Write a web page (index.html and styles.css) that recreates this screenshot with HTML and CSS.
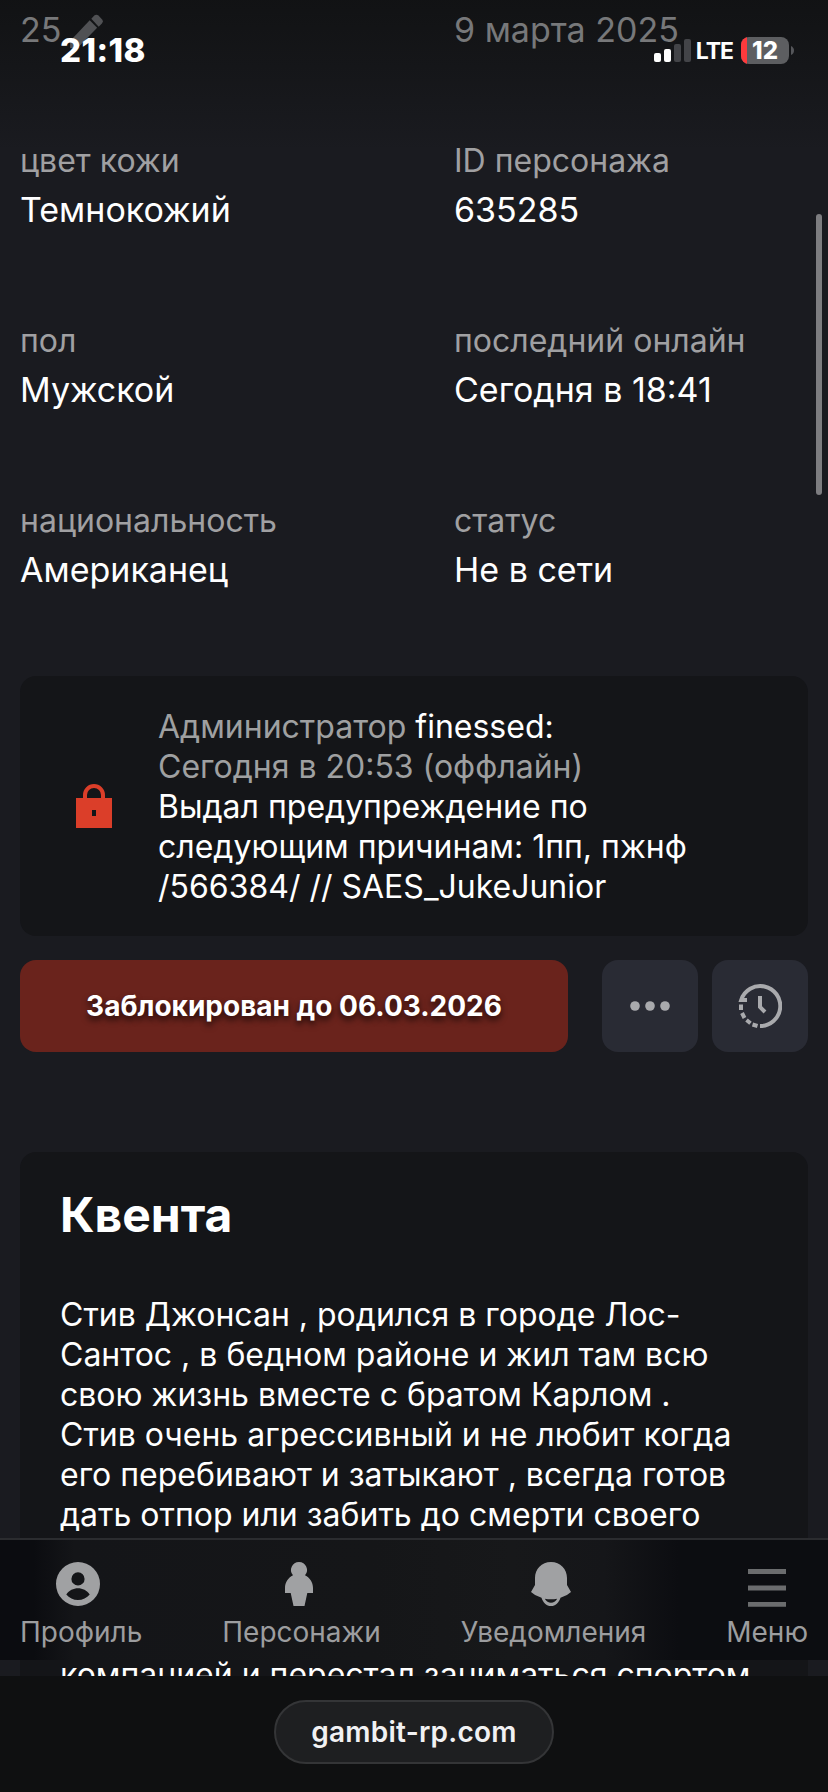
FILE: index.html
```html
<!DOCTYPE html>
<html lang="ru">
<head>
<meta charset="utf-8">
<title>gambit-rp.com</title>
<link rel="stylesheet" href="styles.css">
</head>
<body>
<div class="screen">
  <main class="content">
    <dl class="facts">
      <div class="fact fact-dim"><dd class="value">25 <svg class="pencil" viewBox="0 0 34 34"><path d="M2 25.500 20.500 6 27.500 13 9 32H2z"/><path d="M22 4.500 24.800 1.500q2-1.800 4 0l3.200 3.400q1.800 2 0 4L29 12z"/></svg></dd></div>
      <div class="fact fact-dim"><dd class="value">9 марта 2025</dd></div>
      <div class="fact"><dt class="label">цвет кожи</dt><dd class="value">Темнокожий</dd></div>
      <div class="fact"><dt class="label">ID персонажа</dt><dd class="value">635285</dd></div>
      <div class="fact"><dt class="label">пол</dt><dd class="value">Мужской</dd></div>
      <div class="fact"><dt class="label">последний онлайн</dt><dd class="value">Сегодня в 18:41</dd></div>
      <div class="fact"><dt class="label">национальность</dt><dd class="value">Американец</dd></div>
      <div class="fact"><dt class="label">статус</dt><dd class="value">Не в сети</dd></div>
    </dl>

    <section class="notice">
      <svg class="lock" viewBox="0 0 36 44"><path d="M9 15V11a9 9 0 0 1 18 0v4" fill="none" stroke="#db3e29" stroke-width="4"/><path fill="#db3e29" fill-rule="evenodd" d="M0 14h36v30H0zM16 26v6h4v-6z"/></svg>
      <div class="notice-text">
        <span class="muted">Администратор</span> finessed:<br>
        <span class="muted">Сегодня в 20:53 (оффлайн)</span><br>
        Выдал предупреждение по<br>
        следующим причинам: 1пп, пжнф<br>
        /566384/ // SAES_JukeJunior
      </div>
    </section>

    <div class="actions">
      <button class="ban">Заблокирован до 06.03.2026</button>
      <button class="square"><svg width="40" height="12" viewBox="0 0 40 12"><circle cx="5" cy="6" r="4.800"/><circle cx="20" cy="6" r="4.800"/><circle cx="35" cy="6" r="4.800"/></svg></button>
      <button class="square"><svg width="44" height="46" viewBox="0 0 44 46"><g fill="none" stroke="#a9aaad" stroke-width="4"><path d="M22 43A20 20 0 1 0 3.200 17H9"/><path d="M22 13v11l5 5"/><path d="M3 21.500v5.500M4 30l2.500 5M8.500 37l4 3.200M14.500 41.500l5 1.500"/></g></svg></button>
    </div>

    <section class="story">
      <h2 class="story-title">Квента</h2>
      <p class="story-text">Стив Джонсан , родился в городе Лос-<br>Сантос , в бедном районе и жил там всю<br>свою жизнь вместе с братом Карлом .<br>Стив очень агрессивный и не любит когда<br>его перебивают и затыкают , всегда готов<br>дать отпор или забить до смерти своего</p>
      <p class="story-text story-rest">компанией и перестал заниматься спортом</p>
    </section>
  </main>

  <div class="shade"></div>

  <header class="status">
    <span class="time">21:18</span>
    <div class="indicators">
      <svg class="signal" width="37" height="23" viewBox="0 0 37 23"><rect y="14" width="7" height="9" rx="2"/><rect x="10" y="10" width="7" height="13" rx="2"/><rect class="off" x="20" y="5" width="7" height="18" rx="2"/><rect class="off" x="30" width="7" height="23" rx="2"/></svg>
      <span class="network">LTE</span>
      <div class="battery"><span class="charge"></span><span class="percent">12</span></div>
      <svg width="3" height="9" viewBox="0 0 3 9"><path d="M0 0q3 1.500 3 4.500T0 9z" fill="#55565a"/></svg>
    </div>
  </header>

  <div class="scrollbar"></div>

  <nav class="tabs">
    <a class="tab"><svg width="44" height="44" viewBox="0 0 44 44"><path fill-rule="evenodd" d="M22 0a22 22 0 1 1 0 44 22 22 0 0 1 0-44zM22 10.300a6.600 6.600 0 1 0 0 13.200 6.600 6.600 0 0 0 0-13.200zM10.300 32.500C13 28.500 17.500 26.300 22 26.300s9 2.200 11.700 6.200C31 36 26.500 38 22 38s-9-2-11.700-5.500z"/></svg>Профиль</a>
    <a class="tab"><svg width="28" height="44" viewBox="0 0 28 44"><path d="M14 0a8 8 0 0 1 6 13.300C25 16 28 20.500 28 26v5h-5.700L19.500 44h-11L5.700 31H0v-5c0-5.500 3-10 8-12.700A8 8 0 0 1 14 0z"/></svg>Персонажи</a>
    <a class="tab"><svg width="42" height="44" viewBox="0 0 42 44"><path fill-rule="evenodd" d="M21 0C30.500 0 37 7 37 16v7l4 7q-4 4-10.500 5.700C29 40.500 25.500 44 21 44s-8-3.500-9.500-8.300Q5 34 1 30l4-7v-7C5 7 11.500 0 21 0zM14.800 36.800c1.500 2.800 3.700 4 6.200 4s4.700-1.200 6.200-4q-6.200 1-12.400 0z"/></svg>Уведомления</a>
    <a class="tab tab-menu"><svg width="38" height="44" viewBox="0 0 38 44"><path d="M0 7h38v5H0zM0 23.500h38v5H0zM0 40h38v4.800H0z"/></svg>Меню</a>
  </nav>

  <footer class="browser"><div class="address">gambit-rp.com</div></footer>
</div>
</body>
</html>
```
FILE: styles.css
```css
* { box-sizing: border-box; }

body {
  margin: 0;
  background: #1a1b20;
  color: #fff;
  font-family: Inter, "Noto Sans", sans-serif;
}

.screen {
  position: relative;
  display: flex;
  flex-direction: column;
  width: 828px;
  height: 1792px;
  overflow: hidden;
}

.content {
  height: 1676px;
  padding: 0 20px;
  overflow: hidden;
}

.facts {
  display: grid;
  grid-template-columns: 1fr 1fr;
  grid-template-rows: 140px 180px 180px 175px;
  column-gap: 80px;
  margin: 0;
  padding-top: 1px;
}

.fact-dim { color: #77787a; }
.label { font-size: 32px; line-height: 40px; color: #a0a0a2; white-space: nowrap; }
.value { margin: 8px 0 0; font-size: 34px; line-height: 42px; white-space: nowrap; }
.pencil { width: 36px; height: 36px; margin: -6px 0 0 -3px; vertical-align: -8px; fill: #505154; }

.notice {
  display: flex;
  align-items: center;
  gap: 46px;
  height: 260px;
  padding: 30px 20px 30px 56px;
  border-radius: 16px;
  background: #141518;
}
.lock { width: 36px; height: 44px; flex: none; }
.notice-text { padding-top: 2px; font-size: 32px; line-height: 40px; white-space: nowrap; }
.muted { color: #9fa0a1; }

.actions { display: flex; gap: 14px; margin-top: 24px; }
.ban, .square {
  display: flex;
  align-items: center;
  justify-content: center;
  height: 92px;
  padding: 0;
  border: 0;
  border-radius: 16px;
  color: #fff;
}
.ban {
  width: 548px;
  margin-right: 20px;
  background: #6a231c;
  font: 700 28px/34px Inter, "Noto Sans", sans-serif;
  text-shadow: 0 4px 6px rgba(0, 0, 0, .7);
}
.square { width: 96px; background: #292b34; fill: #a9aaad; }

.story {
  height: 700px;
  margin-top: 100px;
  padding: 34px 40px;
  border-radius: 16px;
  background: #141518;
}
.story-title { margin: 0 0 51px; font-size: 48px; line-height: 58px; font-weight: 700; }
.story-text { margin: 0; font-size: 32px; line-height: 40px; white-space: nowrap; }
.story-rest { margin-top: 120px; }

.shade {
  position: absolute;
  inset: 0 0 auto;
  height: 150px;
  background: linear-gradient(rgba(16, 17, 18, .85), rgba(16, 17, 18, .45) 50%, rgba(16, 17, 18, 0));
  z-index: -1;
}

.status {
  position: absolute;
  inset: 30px 34px auto 60px;
  display: flex;
  align-items: center;
  justify-content: space-between;
  height: 40px;
}
.time { font-size: 33px; font-weight: 800; line-height: 40px; letter-spacing: .4px; }
.indicators { display: flex; align-items: center; }
.signal { fill: #fff; }
.signal .off { fill: #434448; }
.network { margin: 2px 8px 0 5px; font-size: 23px; font-weight: 700; letter-spacing: -1px; }
.battery {
  position: relative;
  width: 48px;
  height: 27px;
  margin-right: 2px;
  border-radius: 8px;
  overflow: hidden;
  background: #5d5e61;
  text-align: center;
}
.charge { position: absolute; inset: 0 auto 0 0; width: 6px; background: #ff3a3c; }
.percent { font-size: 24px; font-weight: 800; line-height: 27px; }

.scrollbar {
  position: absolute;
  top: 214px;
  left: 816px;
  width: 6px;
  height: 281px;
  border-radius: 3px;
  background: #7d7d80;
}

.tabs {
  position: absolute;
  top: 1538px;
  left: 0;
  display: flex;
  justify-content: space-between;
  width: 828px;
  height: 122px;
  padding: 22px 20px 0;
  border-top: 2px solid #2b2c2f;
  background: linear-gradient(90deg, #0b0c10 4%, #141518 9%, #151618 45%, #17181a 62%, #151619 73%, #0c0d11 82%);
  color: #9c9d9f;
}
.tab {
  display: flex;
  flex-direction: column;
  align-items: center;
  gap: 9px;
  font-size: 28px;
  line-height: 34px;
  fill: #a0a1a3;
}
.tab svg { margin-right: 6px; overflow: visible; }
.tab-menu { fill: #6b6c6e; }
.tab-menu svg { margin-right: 0; }

.browser {
  display: flex;
  justify-content: center;
  height: 116px;
  padding-top: 24px;
  background: #0f1011;
}
.address {
  width: 280px;
  height: 64px;
  border: 2px solid #343537;
  border-radius: 32px;
  background: #1e1f21;
  color: #f1f1f3;
  font-size: 28px;
  font-weight: 600;
  line-height: 60px;
  letter-spacing: .25px;
  text-align: center;
}
```
